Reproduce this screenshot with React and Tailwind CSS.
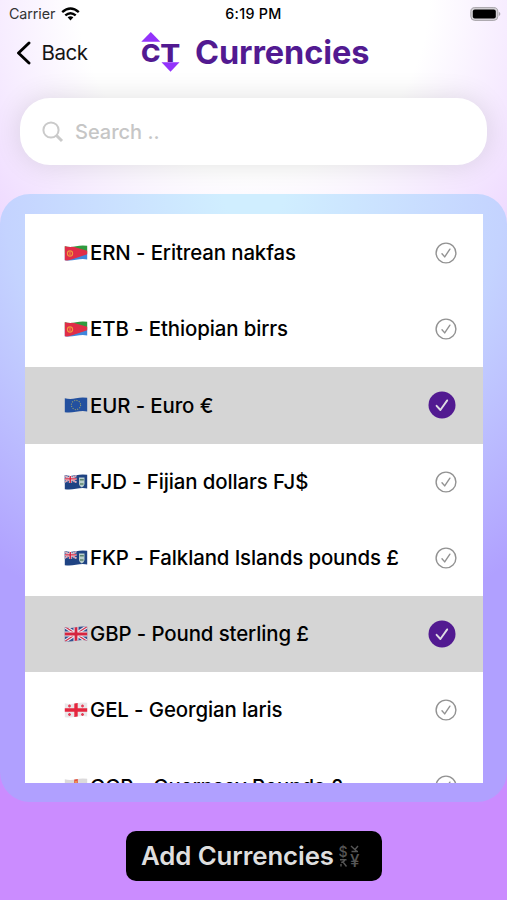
import { useState } from 'react';

const CURRENCIES = [
    { code: 'ERN', name: 'Eritrean nakfas', flag: 'er' },
    { code: 'ETB', name: 'Ethiopian birrs', flag: 'er' },
    { code: 'EUR', name: 'Euro €', flag: 'eu' },
    { code: 'FJD', name: 'Fijian dollars FJ$', flag: 'fk' },
    { code: 'FKP', name: 'Falkland Islands pounds £', flag: 'fk' },
    { code: 'GBP', name: 'Pound sterling £', flag: 'gb' },
    { code: 'GEL', name: 'Georgian laris', flag: 'ge' },
    { code: 'GGP', name: 'Guernsey Pounds £', flag: 'gg' },
];

const UnionJack = () => (
    <>
        <rect width="24" height="18" fill="#34508f" />
        <path d="M0 1L24 17M24 1L0 17" stroke="#eceaf0" strokeWidth="3.4" />
        <path d="M0 1L24 17M24 1L0 17" stroke="#d2304c" strokeWidth="1.1" />
        <path d="M12 0V18M0 9H24" stroke="#eceaf0" strokeWidth="5" />
        <path d="M12 0V18M0 9H24" stroke="#d5243f" strokeWidth="2.8" />
    </>
);

const flagArt = {
    er: (
        <>
            <rect width="24" height="9" fill="#2f9a3e" />
            <rect y="9" width="24" height="9" fill="#3f86dc" />
            <path d="M0 0L24 7V10L0 18Z" fill="#e02d48" />
            <circle cx="6" cy="9.5" r="2.6" fill="none" stroke="#ee9b3c" strokeWidth="1.1" />
            <path d="M6 8V11" stroke="#ee9b3c" strokeWidth="1" />
        </>
    ),
    eu: (
        <>
            <rect width="24" height="18" fill="#23509f" />
            <circle cx="12" cy="9" r="4.6" fill="none" stroke="#8f9a72" strokeWidth="1.1" strokeDasharray="1.1 1.3" />
        </>
    ),
    fk: (
        <>
            <rect width="24" height="18" fill="#1f4383" />
            <g transform="translate(0 2) scale(.52 .44)">
                <UnionJack />
            </g>
            <path d="M15 4.500H20.500V11Q20 14 17.800 14.500Q15.500 14 15 11Z" fill="#b9cdcb" />
            <path d="M15.800 6.800H19.800M16 11H19.500" stroke="#5c8570" strokeWidth="1.500" />
        </>
    ),
    gb: <UnionJack />,
    ge: (
        <>
            <rect width="24" height="18" fill="#e9e6e8" />
            <path d="M12 0V18M0 9H24" stroke="#e5263e" strokeWidth="3.400" />
            <path d="M4 5H7M5.500 3.500V6.500M17 5H20M18.500 3.500V6.500M4 13.500H7M5.500 12V15M17 13.500H20M18.500 12V15" stroke="#e5425a" strokeWidth="1.300" />
        </>
    ),
    gg: (
        <>
            <rect width="24" height="18" fill="#dcdadb" />
            <path d="M12 0V18M0 9H24" stroke="#e3543f" strokeWidth="3.600" />
            <path d="M12 4V15M5 9H19" stroke="#eec15b" strokeWidth="1.200" />
        </>
    ),
};

const Flag = ({ name, id }) => (
    <svg viewBox="0 0 24 18" className="w-6 h-[18px] shrink-0">
        <clipPath id={id}>
            <path d="M0.800 2.200Q6 3.600 12 2.200T23.200 1.800V15.400Q18 14.600 12 15.800T0.800 16.200Z" />
        </clipPath>
        <g clipPath={`url(#${id})`}>{flagArt[name]}</g>
    </svg>
);

const CheckMark = ({ selected }) =>
    selected ? (
        <svg viewBox="0 0 28 28" className="w-7 h-7 mr-[27px]" fill="none">
            <circle cx="14" cy="14" r="13.500" fill="#521a91" />
            <path d="M8.600 14.800L12.400 19L19.200 9.400" stroke="#dedbe3" strokeWidth="1.900" strokeLinecap="round" strokeLinejoin="round" />
        </svg>
    ) : (
        <svg viewBox="0 0 22 22" className="w-[22px] h-[22px] mr-[26px]" fill="none" stroke="#929292">
            <circle cx="11" cy="11" r="9.900" strokeWidth="1.400" />
            <path d="M7 11.800L9.700 14.900L14.900 7.200" strokeWidth="1.400" strokeLinecap="round" strokeLinejoin="round" />
        </svg>
    );

const StatusBar = () => (
    <div className="h-7 pl-[9px] pr-[6px] grid grid-cols-3 items-center text-[14.3px] leading-7 text-black">
        <div className="flex items-center gap-[6px]">
            <span className="text-[#333] tracking-[-0.1px]">Carrier</span>
            <svg viewBox="0 0 19 14" className="w-[19px] h-[14px]" fill="none" stroke="#000" strokeWidth="2.400">
                <path d="M1.200 5.200Q9.500 -2.200 17.800 5.200" />
                <path d="M4.300 8.400Q9.500 3.900 14.700 8.400" />
                <path d="M6.600 10.300Q9.500 8.200 12.400 10.300L9.500 13.400Z" fill="#000" stroke="none" />
            </svg>
        </div>
        <span className="pr-[3px] text-center font-medium tracking-[0.3px]">6:19 PM</span>
        <svg viewBox="0 0 31 14" className="w-[31px] h-[14px] mt-[-1px] justify-self-end">
            <rect x=".8" y=".6" width="27" height="12.800" rx="4" fill="#d5d2d7" stroke="#a7a4a9" strokeWidth="1" />
            <rect x="2.800" y="2.600" width="23" height="8.800" rx="2" fill="#000" />
            <path d="M28.800 4.800Q32 7 28.800 9.200Z" fill="#aaa7ac" />
        </svg>
    </div>
);

const Logo = () => (
    <svg viewBox="0 0 40 40" className="w-10 h-10">
        <path d="M9.800 0L19.300 9.800H0.300Z" fill="#9333fb" />
        <path d="M20.500 30.300H38.500L29.500 39.800Z" fill="#9333fb" />
        <text x="0" y="29.600" fontFamily="Inter, sans-serif" fontWeight="800" fontSize="25" textLength="19.500" lengthAdjust="spacingAndGlyphs" fill="#521a91">C</text>
        <text x="19.200" y="29.600" fontFamily="Inter, sans-serif" fontWeight="800" fontSize="25" textLength="20" lengthAdjust="spacingAndGlyphs" fill="#521a91">T</text>
    </svg>
);

const CurrencySigns = () => (
    <svg viewBox="0 0 24 24" className="w-6 h-6" fill="none" stroke="#555" strokeWidth="1.400">
        <text x="0.500" y="12.500" fontSize="14" fontWeight="500" fontFamily="Inter, sans-serif" fill="#555" stroke="none">$</text>
        <path d="M2 15.800H8.500M6.500 15.800Q6.500 18 3.200 18.500M5 18L8.500 22.500M3 20V22.500" />
        <path d="M13 2L19 7.500M20 2L17 5.500M13.500 7.500H20" />
        <text x="12" y="22.800" fontSize="17" fontWeight="500" fontFamily="Inter, sans-serif" fill="#555" stroke="none">¥</text>
    </svg>
);

const App = () => {
    const [selected, setSelected] = useState(['EUR', 'GBP']);

    const toggle = (code) => {
        setSelected(selected.includes(code) ? selected.filter((c) => c !== code) : [...selected, code]);
    };

    return (
        <div className="w-[507px] h-[900px] overflow-hidden flex flex-col font-[Inter,sans-serif] bg-[radial-gradient(circle_at_50%_0,#ffffff_175px,#cb8cff_670px)]">
            <StatusBar />

            {/* Header */}
            <header className="h-[70px] pl-4 flex items-start">
                <button className="w-[125px] pt-[10px] flex items-center text-[20.5px] leading-[30px] tracking-[-0.5px] text-[#151515]">
                    <svg viewBox="0 0 15 24" className="w-[15px] h-6 mr-[10.5px]" fill="none" stroke="#000" strokeWidth="2.900" strokeLinecap="round" strokeLinejoin="round">
                        <path d="M13 2L2.500 12L13 22" />
                    </svg>
                    Back
                </button>
                <div className="pt-[4px] flex">
                    <Logo />
                    <h1 className="ml-[14px] text-[32.5px] leading-[42px] font-bold text-[#521a91] tracking-[-0.1px]">Currencies</h1>
                </div>
            </header>

            {/* Search */}
            <label className="h-[67px] shrink-0 mx-5 pl-[22px] flex items-center bg-white rounded-[30px] shadow-[0_0_28px_rgba(0,0,0,0.12)]">
                <svg viewBox="0 0 22 22" className="w-[22px] h-[22px]" fill="none" stroke="#cacaca" strokeWidth="2">
                    <circle cx="9" cy="9" r="7.600" />
                    <path d="M14.500 14.500L20 20" strokeWidth="3" />
                </svg>
                <input
                    type="text"
                    placeholder="Search .."
                    className="ml-[11px] flex-1 text-[20px] font-medium outline-none placeholder:text-[#c6c6c6]"
                />
            </label>

            {/* Currency list */}
            <div className="mt-[29px] h-[608px] shrink-0 py-[19.5px] px-[25px] rounded-[30px] bg-[radial-gradient(circle_at_50%_0,#d0eeff_30px,#c4d3ff_250px,#b0a0ff_450px)]">
                <ul className="h-[569px] w-[457.5px] overflow-hidden bg-white pt-[1.5px]">
                    {CURRENCIES.map((currency) => (
                        <li
                            key={currency.code}
                            onClick={() => toggle(currency.code)}
                            className={`h-[76.2px] pl-[39px] flex items-center justify-between ${selected.includes(currency.code) ? 'bg-[#d5d5d5]' : 'bg-white'}`}
                        >
                            <div className="flex items-center gap-[2px]">
                                <Flag name={currency.flag} id={`flag-${currency.code}`} />
                                <span className="pt-px text-[20.4px] font-medium text-black whitespace-nowrap tracking-[-0.1px]">
                                    {currency.code} - {currency.name}
                                </span>
                            </div>
                            <CheckMark selected={selected.includes(currency.code)} />
                        </li>
                    ))}
                </ul>
            </div>

            <button className="mt-[29px] ml-[126px] w-[256px] h-[50px] shrink-0 flex items-center pl-[15px] gap-[4px] bg-black rounded-[10px]">
                <span className="pt-px text-[25.800px] font-semibold text-[#dedede] tracking-[-0.1px] whitespace-nowrap">Add Currencies</span>
                <CurrencySigns />
            </button>
        </div>
    );
};

export default App;
